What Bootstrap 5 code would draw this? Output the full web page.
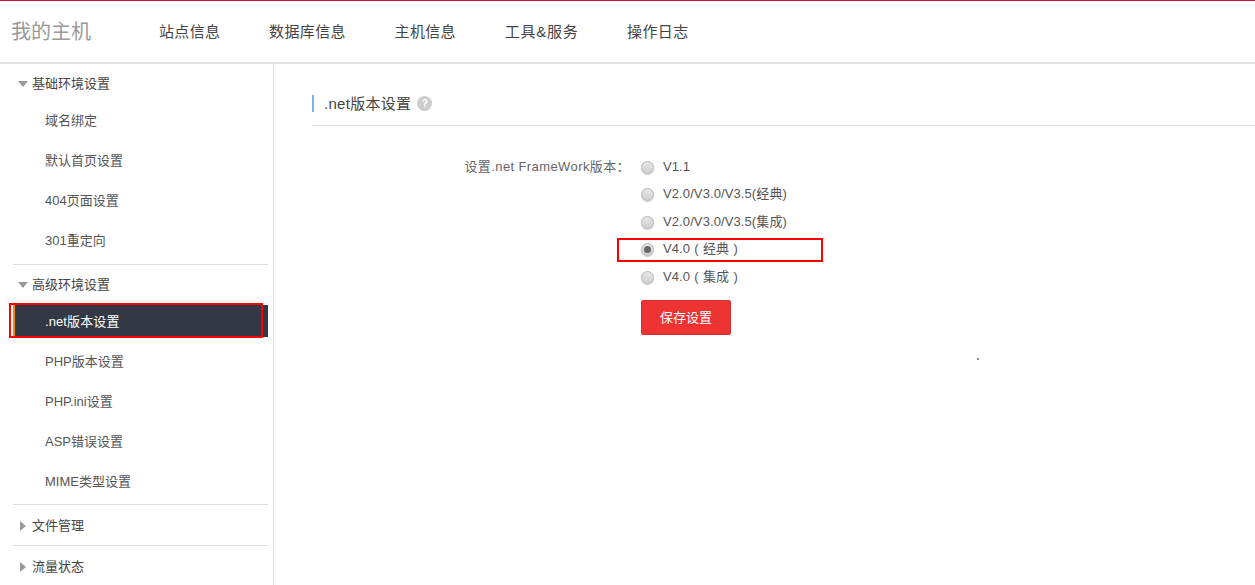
<!DOCTYPE html>
<html lang="zh-CN">
<head>
<meta charset="utf-8">
<title>我的主机</title>
<link rel="stylesheet" href="https://cdn.jsdelivr.net/npm/bootstrap@5.3.0/dist/css/bootstrap.min.css">
<style>
html,body{height:585px;overflow:hidden}
body{font-family:"Liberation Sans","Noto Sans CJK SC",sans-serif;font-size:13px;color:#555;background:#fff}
.topbar{height:64px;border-top:1px solid #c9102f;border-bottom:2px solid #e4e4e4;padding-left:11px}
.brandname{font-size:20px;color:#999;width:148px;line-height:60px;text-decoration:none}
.topbar .navbar-nav{gap:48.7px;flex-direction:row}
.toplink{font-size:15px;letter-spacing:.35px;color:#444;text-decoration:none;line-height:60px}
.toplink-wide{letter-spacing:.75px}
.pagebody{height:521px}
.sidepane{width:274px;border-right:1px solid #ddd;padding:0 5px 0 13px;flex:none;overflow:hidden}
.sidegroup{border-bottom:1px solid #ddd;padding:4px 0}
.sidegroup-tight{padding-bottom:3px}
.sidegroup-closed{padding:5px 0 3px}
.sidegroup:last-child{border-bottom:0}
.grouphead{height:32px;color:#444;padding-left:5px;gap:4px}
.tri-down{width:0;height:0;border:5px solid transparent;border-top:6px solid #999;border-bottom:0}
.tri-right{width:0;height:0;border:5px solid transparent;border-left:6px solid #999;border-right:0;margin-left:2px;margin-right:2px}
.sideitem{display:block;height:40px;line-height:41px;padding-left:32px;color:#555;text-decoration:none;white-space:nowrap}
.sideitem.current{height:32px;line-height:33px;margin:4px 0;color:#fff;background:#333844;border-left:2px solid #f08a00;position:relative;padding-left:30px;letter-spacing:.1px}
.redbox{position:absolute;border:2px solid #f00;pointer-events:none}
.redbox-side{left:-6px;top:-2px;width:254px;height:35px}
.redbox-radio{left:-24px;top:-4px;width:206px;height:24px}
.mainpane{padding:31px 0 0 38px;flex:1;min-width:0}
.sectitle{border-bottom:1px solid #ddd;height:31px;font-size:15px;letter-spacing:.3px;color:#444;margin-bottom:34px}
.sectitle-text{border-left:2px solid #7fb2e0;height:17px;line-height:17px;padding-left:10px}
.helpdot{width:15px;height:15px;border-radius:50%;background:#ccc;color:#fff;font-size:11px;font-weight:700;text-align:center;line-height:15px;margin-left:6px;letter-spacing:0}
.formlabel{width:329px;text-align:right;padding-right:11px;color:#666;line-height:14px;letter-spacing:.4px}
.radiorow{height:27.4px;color:#555;gap:9px;position:relative;line-height:14px;letter-spacing:.1px;word-spacing:.5px}
.radiorow .radiodot{flex:none;width:13px;height:13px;border-radius:50%;border:1px solid #b5b5b5;background:linear-gradient(#e6e6e6,#d0d0d0);box-shadow:0 1px 1px #ccc;position:relative;margin-top:1px}
.radiodot.on::after{content:"";position:absolute;left:2px;top:2px;width:7px;height:7px;border-radius:50%;background:#666}
.savebtn{background:#ee3333;border:1px solid #d83030;color:#fff;font-size:13px;width:90px;height:35px;border-radius:2px;padding:0;margin-top:3px}
.savebtn:hover{background:#ee3333;color:#fff}
.specdot{position:absolute;left:977px;top:358px;width:2px;height:2px;background:#888}
</style>
</head>
<body>
<header class="topbar d-flex align-items-center">
  <a class="brandname" href="#">我的主机</a>
  <nav class="navbar-nav d-flex">
    <a class="toplink" href="#">站点信息</a>
    <a class="toplink" href="#">数据库信息</a>
    <a class="toplink" href="#">主机信息</a>
    <a class="toplink toplink-wide" href="#">工具&amp;服务</a>
    <a class="toplink" href="#">操作日志</a>
  </nav>
</header>
<div class="pagebody d-flex">
  <aside class="sidepane">
    <div class="sidegroup">
      <div class="grouphead d-flex align-items-center"><span class="tri-down"></span>基础环境设置</div>
      <a class="sideitem" href="#">域名绑定</a>
      <a class="sideitem" href="#">默认首页设置</a>
      <a class="sideitem" href="#">404页面设置</a>
      <a class="sideitem" href="#">301重定向</a>
    </div>
    <div class="sidegroup sidegroup-tight">
      <div class="grouphead d-flex align-items-center"><span class="tri-down"></span>高级环境设置</div>
      <a class="sideitem current" href="#">.net版本设置<span class="redbox redbox-side"></span></a>
      <a class="sideitem" href="#">PHP版本设置</a>
      <a class="sideitem" href="#">PHP.ini设置</a>
      <a class="sideitem" href="#">ASP错误设置</a>
      <a class="sideitem" href="#">MIME类型设置</a>
    </div>
    <div class="sidegroup sidegroup-closed">
      <div class="grouphead d-flex align-items-center"><span class="tri-right"></span>文件管理</div>
    </div>
    <div class="sidegroup sidegroup-closed">
      <div class="grouphead d-flex align-items-center"><span class="tri-right"></span>流量状态</div>
    </div>
  </aside>
  <main class="mainpane">
    <div class="sectitle">
      <div class="d-flex align-items-center"><span class="sectitle-text">.net版本设置</span><span class="helpdot">?</span></div>
    </div>
    <div class="d-flex">
      <div class="formlabel">设置.net FrameWork版本：</div>
      <div>
        <div class="radiorow d-flex"><span class="radiodot"></span>V1.1</div>
        <div class="radiorow d-flex"><span class="radiodot"></span>V2.0/V3.0/V3.5(经典)</div>
        <div class="radiorow d-flex"><span class="radiodot"></span>V2.0/V3.0/V3.5(集成)</div>
        <div class="radiorow d-flex"><span class="radiodot on"></span><span>V4.0 ( 经典 )</span><span class="redbox redbox-radio"></span></div>
        <div class="radiorow d-flex"><span class="radiodot"></span><span>V4.0 ( 集成 )</span></div>
        <button class="btn savebtn" type="button">保存设置</button>
      </div>
    </div>
  </main>
</div>
<span class="specdot"></span>
<script src="https://cdn.jsdelivr.net/npm/bootstrap@5.3.0/dist/js/bootstrap.bundle.min.js"></script>
</body>
</html>
